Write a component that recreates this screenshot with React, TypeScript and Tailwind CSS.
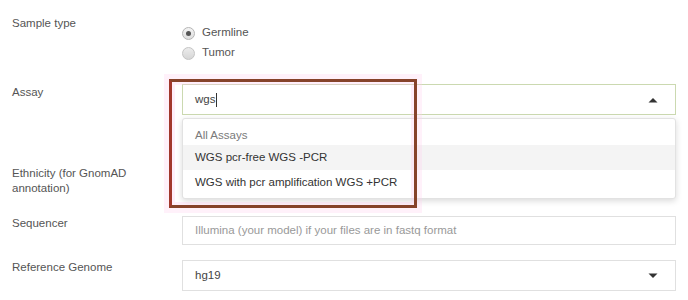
import React from "react";

const font = { fontFamily: '"Liberation Sans", Arial, sans-serif' };

function Radio({ checked, label }: { checked: boolean; label: string }) {
  return (
    <label className="flex items-center h-[20px] gap-[7px]">
      <span
        className={
          "relative w-[13px] h-[13px] rounded-full border flex items-center justify-center " +
          (checked
            ? "border-[#b5b5b5] bg-gradient-to-b from-[#f4f4f4] to-[#dedede]"
            : "border-[#c4c4c4] bg-gradient-to-b from-[#ececec] to-[#d6d6d6]")
        }
      >
        {checked && <span className="w-[5px] h-[5px] rounded-full bg-[#555]" />}
      </span>
      <span className="text-[#555]">{label}</span>
    </label>
  );
}

function Caret({ up }: { up?: boolean }) {
  return (
    <svg width="10" height="6" viewBox="0 0 10 6" className="shrink-0">
      {up ? <path d="M0.5 5.5 L5 1 L9.5 5.5 Z" fill="#333" /> : <path d="M0.5 0.5 L5 5 L9.5 0.5 Z" fill="#333" />}
    </svg>
  );
}

export default function App() {
  return (
    <div className="relative w-[688px] h-[300px] bg-white overflow-hidden text-[11.5px]" style={font}>
      <div className="flex flex-col pt-[15px]">
        {/* Sample type */}
        <div className="flex">
          <div className="w-[182px] shrink-0 pl-[12px] leading-[16px] text-[#555]">Sample type</div>
          <div className="flex flex-col pt-[8px]">
            <Radio checked label="Germline" />
            <Radio checked={false} label="Tumor" />
          </div>
        </div>

        {/* Assay */}
        <div className="flex mt-[21px]">
          <div className="w-[182px] shrink-0 pl-[12px] leading-[16px] text-[#555]">Assay</div>
          <div className="relative flex-1 mr-[12px]">
            <div className="h-[31px] border border-[#cbd9b0] bg-white flex items-center pl-[12px] pr-[17px]">
              <span className="text-[#444]">wgs</span>
              <span className="w-px h-[14px] bg-[#333] ml-[1px]" />
              <span className="flex-1" />
              <Caret up />
            </div>
            <div className="absolute left-0 right-0 top-[34px] z-10 bg-white border border-[#e2e2e2] rounded-[3px] shadow-[0_2px_6px_rgba(0,0,0,0.15)] pt-[1px] pb-[3px]">
              <div className="h-[25px] flex items-center pl-[12px] pt-[6px] text-[#7a7a7a]">All Assays</div>
              <div className="h-[25px] flex items-center pl-[12px] text-[#333] bg-[#f4f4f4]">WGS pcr-free WGS -PCR</div>
              <div className="h-[25px] flex items-center pl-[12px] text-[#333]">WGS with pcr amplification WGS +PCR</div>
            </div>
          </div>
        </div>

        {/* Ethnicity */}
        <div className="flex mt-[51px]">
          <div className="w-[182px] shrink-0 pl-[12px] leading-[15px] text-[#555]">
            Ethnicity (for GnomAD
            <br />
            annotation)
          </div>
          <div className="flex-1 mr-[12px]">
            <div className="h-[31px] border border-[#e0e0e0] bg-white" />
          </div>
        </div>

        {/* Sequencer */}
        <div className="flex mt-[18px]">
          <div className="w-[182px] shrink-0 pl-[12px] leading-[16px] text-[#555]">Sequencer</div>
          <div className="flex-1 mr-[12px] mt-[1px]">
            <div className="h-[29px] border border-[#e0e0e0] bg-white flex items-center pl-[12px] text-[#999]">
              Illumina (your model) if your files are in fastq format
            </div>
          </div>
        </div>

        {/* Reference Genome */}
        <div className="flex mt-[14px]">
          <div className="w-[182px] shrink-0 pl-[12px] leading-[16px] text-[#555]">Reference Genome</div>
          <div className="flex-1 mr-[12px] mt-[1px]">
            <div className="h-[31px] border border-[#e0e0e0] bg-white flex items-center pl-[12px] pr-[17px] text-[#444]">
              <span className="flex-1">hg19</span>
              <Caret />
            </div>
          </div>
        </div>
      </div>

      {/* annotation box */}
      <div className="absolute left-[169px] top-[79px] w-[248px] h-[129px] z-20 border-[3px] border-[#86432a] border-l-[#a2382c] shadow-[0_0_0_5px_rgba(255,210,240,0.3),inset_0_0_0_3px_rgba(255,200,238,0.3)] pointer-events-none" />
    </div>
  );
}
